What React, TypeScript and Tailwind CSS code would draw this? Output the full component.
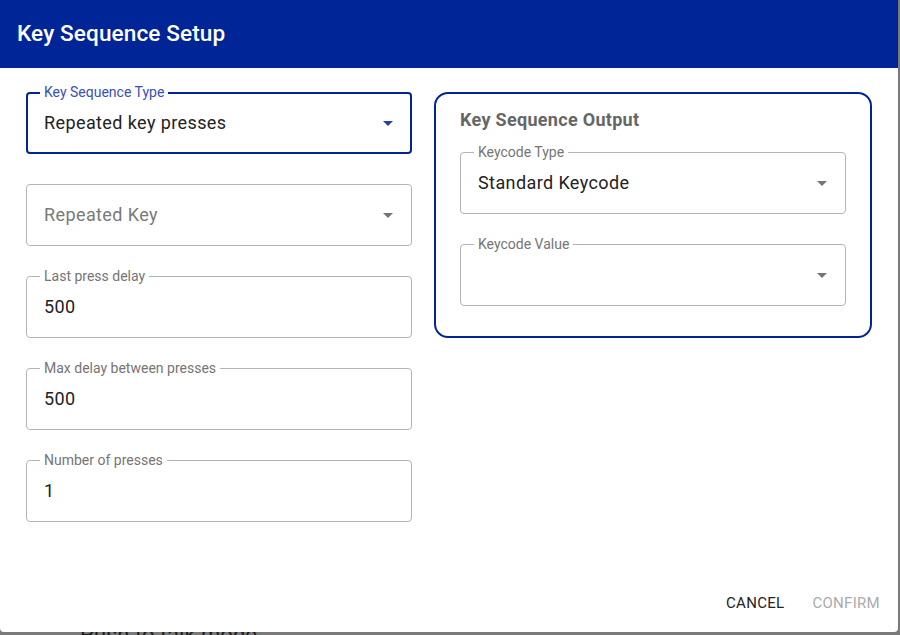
import * as React from "react";

const BLUE = "#002596";

function DropArrow({ color }: { color: string }) {
  return (
    <svg width="24" height="24" viewBox="0 0 24 24" className="shrink-0" fill={color}>
      <path d="M7 10l5 5 5-5z" />
    </svg>
  );
}

type FieldProps = {
  label?: string;
  value?: string;
  placeholder?: string;
  select?: boolean;
  focused?: boolean;
};

function Field({ label, value, placeholder, select, focused }: FieldProps) {
  return (
    <div
      className={
        "relative h-[62px] rounded-[4px] flex items-center " +
        (focused ? "border-2 border-[#002596] pl-[16px] pr-[3px]" : "border border-[#b3b3b3] pl-[17px] pr-[4px]")
      }
    >
      {label && (
        <span
          className={
            "absolute bg-white px-[4px] text-[14px] leading-[16px] " +
            (focused ? "-top-[10px] left-[12px] text-[#3a4fb5]" : "-top-[9px] left-[13px] text-[#757575]")
          }
        >
          {label}
        </span>
      )}
      <div className="flex-1 min-w-0 text-[18px] leading-[24px] tracking-[0.4px]">
        {value ? (
          <span className="text-[#222222]">{value}</span>
        ) : (
          <span className="text-[#7a7a7a]">{placeholder ?? "\u00a0"}</span>
        )}
      </div>
      {select && <DropArrow color={focused ? "#2a3fa6" : "#757575"} />}
      {select && <span className="w-[7px] shrink-0" />}
    </div>
  );
}

export default function App() {
  return (
    <div className="h-[635px] w-[900px] overflow-hidden bg-[#7a7a7a] font-['Roboto',sans-serif]">
      <div className="relative z-10 flex h-[632px] w-[898px] flex-col rounded-b-[4px] bg-white">
        {/* Header */}
        <div className="flex h-[68px] items-center px-[17px]" style={{ background: BLUE }}>
          <h1 className="text-[22.6px] font-medium text-white tracking-[0.1px]">Key Sequence Setup</h1>
        </div>

        {/* Body */}
        <div className="flex gap-[22px] px-[26px] pt-[24px]">
          <div className="flex w-[386px] flex-col gap-[30px]">
            <Field label="Key Sequence Type" value="Repeated key presses" select focused />
            <Field placeholder="Repeated Key" select />
            <Field label="Last press delay" value="500" />
            <Field label="Max delay between presses" value="500" />
            <Field label="Number of presses" value="1" />
          </div>

          <div className="flex h-[246px] flex-1 flex-col rounded-[14px] border-2 border-[#002596] px-[24px] pt-[16px]">
            <h2 className="text-[18px] font-bold leading-[20px] tracking-[0.3px] text-[#666666]">
              Key Sequence Output
            </h2>
            <div className="mt-[22px] flex flex-col gap-[30px]">
              <Field label="Keycode Type" value="Standard Keycode" select />
              <Field label="Keycode Value" select />
            </div>
          </div>
        </div>

        {/* Actions */}
        <div className="mt-auto flex justify-end gap-[12px] pb-[11px] pr-[10px]">
          <button className="h-[36px] min-w-[64px] px-[8px] text-[15px] uppercase tracking-[0.3px] text-[#222222]">
            Cancel
          </button>
          <button disabled className="h-[36px] min-w-[64px] px-[8px] text-[15px] uppercase tracking-[0.3px] text-[#ababab]">
            Confirm
          </button>
        </div>
      </div>

      {/* page behind the dialog */}
      <div className="-mt-[10px] pl-[80px] text-[22px] leading-[26px] text-[#1c1c1c]">Push to talk mode</div>
    </div>
  );
}
